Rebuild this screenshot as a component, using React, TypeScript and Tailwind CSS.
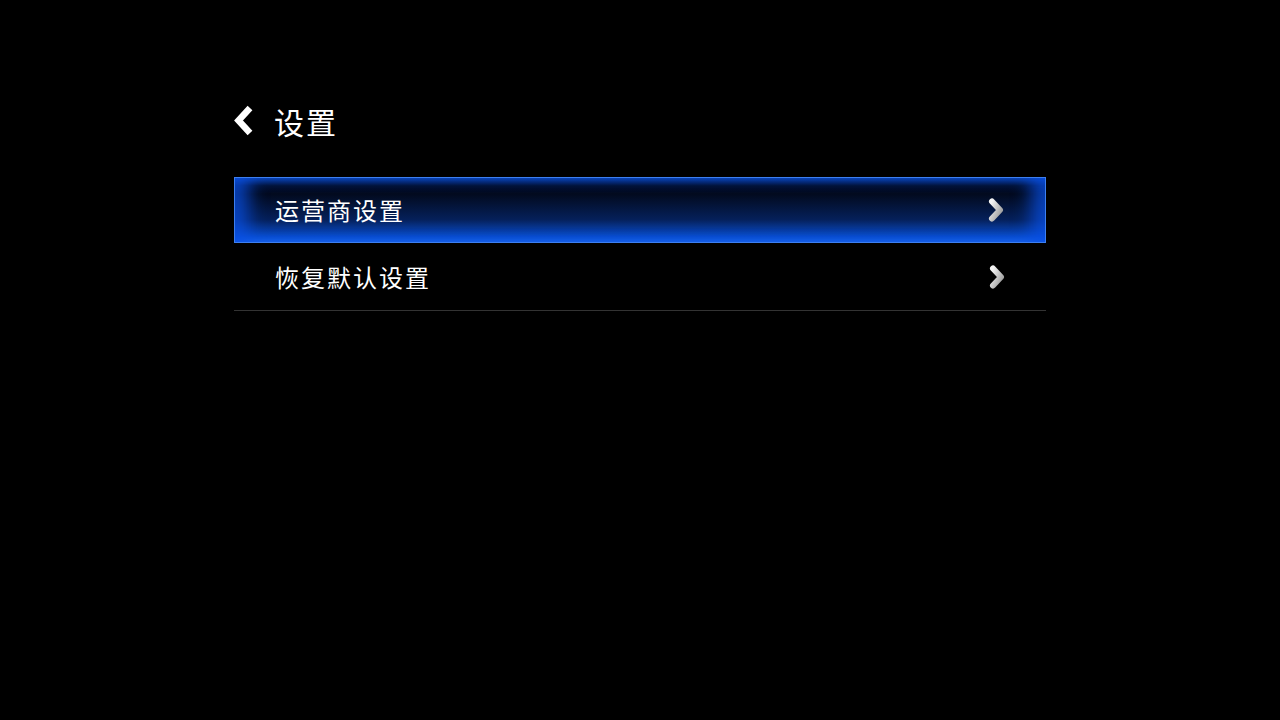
import React from "react";

const font = { fontFamily: '"Noto Sans CJK SC", "Noto Sans", sans-serif' };

const BackIcon = () => (
  <svg width="24" height="32" viewBox="0 0 24 32" className="block">
    <polyline
      points="18,3 6.5,15.5 18,28"
      fill="none"
      stroke="#fff"
      strokeWidth="6.5"
      strokeLinejoin="miter"
      strokeLinecap="butt"
    />
  </svg>
);

const ChevronIcon = ({ id }: { id: string }) => (
  <svg width="22" height="28" viewBox="0 0 22 28" className="block">
    <defs>
      <linearGradient id={id} x1="0" y1="0" x2="1" y2="1">
        <stop offset="0" stopColor="#f4f4f4" />
        <stop offset="1" stopColor="#9a9a9a" />
      </linearGradient>
    </defs>
    <polyline
      points="7,5.5 15,14 7,22.5"
      fill="none"
      stroke={`url(#${id})`}
      strokeWidth="6"
      strokeLinejoin="round"
      strokeLinecap="round"
    />
  </svg>
);

const items = [
  { label: "运营商设置", active: true },
  { label: "恢复默认设置", active: false },
];

export default function App() {
  return (
    <div className="w-[1280px] h-[720px] bg-black text-white" style={font}>
      <div className="w-[812px] ml-[234px] pt-[103px]">
        <div className="flex items-center h-[36px]">
          <div className="w-[42px] -ml-[2px]">
            <BackIcon />
          </div>
          <span className="text-[30px] leading-none tracking-[2px]">设置</span>
        </div>
        <div className="mt-[38px]">
          {items.map((it, i) =>
            it.active ? (
              <div
                key={i}
                className="h-[66px] flex items-center justify-between pl-[40px] pr-[38px] border border-[#3d7ff0] bg-[linear-gradient(to_bottom,#0a3fa8_0%,#031235_12%,#020a1e_25%,#05205a_65%,#0a4fd0_92%,#1a62e8_100%)] shadow-[inset_22px_0_18px_-8px_rgba(10,80,230,0.75),inset_-22px_0_18px_-8px_rgba(10,80,230,0.75)]"
              >
                <span className="text-[24px] leading-none tracking-[2px]">{it.label}</span>
                <ChevronIcon id={`g${i}`} />
              </div>
            ) : (
              <div
                key={i}
                className="h-[68px] flex items-center justify-between pl-[41px] pr-[38px] border-b border-[#333]"
              >
                <span className="text-[24px] leading-none tracking-[2px]">{it.label}</span>
                <ChevronIcon id={`g${i}`} />
              </div>
            )
          )}
        </div>
      </div>
    </div>
  );
}
